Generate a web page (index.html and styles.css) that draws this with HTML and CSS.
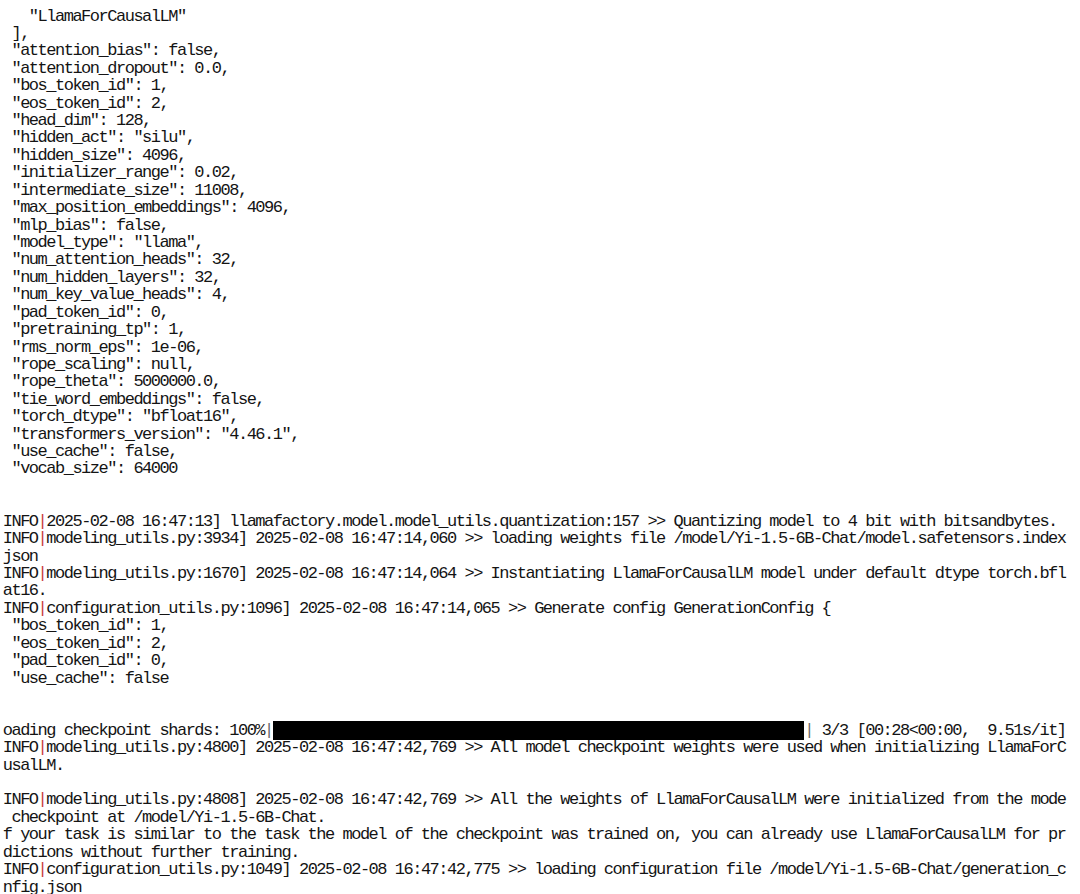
FILE: index.html
```html
<!DOCTYPE html>
<html lang="en">
<head>
<meta charset="utf-8">
<title>Terminal log</title>
<link rel="stylesheet" href="styles.css">
</head>
<body>
<main class="screen">
<pre class="term">    "LlamaForCausalLM"
  ],
  "attention_bias": false,
  "attention_dropout": 0.0,
  "bos_token_id": 1,
  "eos_token_id": 2,
  "head_dim": 128,
  "hidden_act": "silu",
  "hidden_size": 4096,
  "initializer_range": 0.02,
  "intermediate_size": 11008,
  "max_position_embeddings": 4096,
  "mlp_bias": false,
  "model_type": "llama",
  "num_attention_heads": 32,
  "num_hidden_layers": 32,
  "num_key_value_heads": 4,
  "pad_token_id": 0,
  "pretraining_tp": 1,
  "rms_norm_eps": 1e-06,
  "rope_scaling": null,
  "rope_theta": 5000000.0,
  "tie_word_embeddings": false,
  "torch_dtype": "bfloat16",
  "transformers_version": "4.46.1",
  "use_cache": false,
  "vocab_size": 64000


 INFO<span class="pipe">|</span>2025-02-08 16:47:13] llamafactory.model.model_utils.quantization:157 &gt;&gt; Quantizing model to 4 bit with bitsandbytes.
 INFO<span class="pipe">|</span>modeling_utils.py:3934] 2025-02-08 16:47:14,060 &gt;&gt; loading weights file /model/Yi-1.5-6B-Chat/model.safetensors.index
 json
 INFO<span class="pipe">|</span>modeling_utils.py:1670] 2025-02-08 16:47:14,064 &gt;&gt; Instantiating LlamaForCausalLM model under default dtype torch.bfl
 at16.
 INFO<span class="pipe">|</span>configuration_utils.py:1096] 2025-02-08 16:47:14,065 &gt;&gt; Generate config GenerationConfig {
  "bos_token_id": 1,
  "eos_token_id": 2,
  "pad_token_id": 0,
  "use_cache": false


 oading checkpoint shards: 100%<span class="bar-edge">|</span><span class="bar">                                                             </span><span class="bar-edge">|</span> 3/3 [00:28&lt;00:00,  9.51s/it]
 INFO<span class="pipe">|</span>modeling_utils.py:4800] 2025-02-08 16:47:42,769 &gt;&gt; All model checkpoint weights were used when initializing LlamaForC
 usalLM.

 INFO<span class="pipe">|</span>modeling_utils.py:4808] 2025-02-08 16:47:42,769 &gt;&gt; All the weights of LlamaForCausalLM were initialized from the mode
  checkpoint at /model/Yi-1.5-6B-Chat.
 f your task is similar to the task the model of the checkpoint was trained on, you can already use LlamaForCausalLM for pr
 dictions without further training.
 INFO<span class="pipe">|</span>configuration_utils.py:1049] 2025-02-08 16:47:42,775 &gt;&gt; loading configuration file /model/Yi-1.5-6B-Chat/generation_c
 nfig.json</pre>
</main>
</body>
</html>
```

FILE: styles.css
```css
html, body {
  margin: 0;
  padding: 0;
  background: #ffffff;
}

body {
  width: 1080px;
  height: 894px;
  overflow: hidden;
}

.screen {
  width: 1080px;
  height: 894px;
  overflow: hidden;
  padding-top: 7.5px;
  box-sizing: border-box;
}

.term {
  margin: 0 0 0 -6px;
  font-family: "Liberation Mono", "DejaVu Sans Mono", monospace;
  font-size: 17px;
  letter-spacing: -1.49px;
  line-height: 17.42px;
  color: #141414;
  white-space: pre;
}

.pipe {
  color: #c8393b;
}

.bar-edge {
  color: #6a6a6a;
}

.bar {
  background: #000000;
}
```
